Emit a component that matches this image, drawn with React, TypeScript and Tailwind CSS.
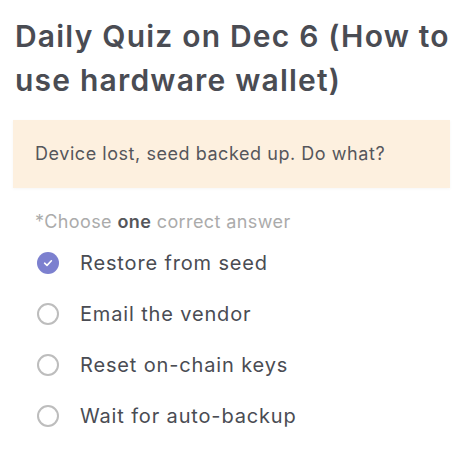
import React from "react";

const options = [
  "Restore from seed",
  "Email the vendor",
  "Reset on-chain keys",
  "Wait for auto-backup",
];

function CheckedRadio() {
  return (
    <span className="flex h-[22px] w-[22px] shrink-0 items-center justify-center rounded-full bg-[#7c80cf]">
      <svg width="12" height="12" viewBox="0 0 12 12" fill="none">
        <path
          d="M2.6 6.2 L5 8.4 L9.4 3.8"
          stroke="#ffffff"
          strokeWidth="1.6"
          strokeLinecap="round"
          strokeLinejoin="round"
        />
      </svg>
    </span>
  );
}

function EmptyRadio() {
  return (
    <span className="block h-[22px] w-[22px] shrink-0 rounded-full border-2 border-[#bdbdbd] bg-white" />
  );
}

export default function App() {
  return (
    <div
      className="min-h-[451px] w-[466px] bg-white"
      style={{ fontFamily: "Inter, 'Noto Sans', sans-serif" }}
    >
      <h1 className="px-[15px] pt-[14px] text-[30px] font-semibold leading-[44px] tracking-[1.2px] text-[#4a4c53]">
        Daily Quiz on Dec 6 (How to use hardware wallet)
      </h1>

      <div className="ml-[13px] mr-[16px] mt-[18px] flex h-[68px] items-center bg-[#fdf0df] px-[22px] shadow-[0_1px_3px_rgba(0,0,0,0.04)]">
        <p className="text-[18px] leading-[24px] tracking-[0.55px] text-[#55565b]">
          Device lost, seed backed up. Do what?
        </p>
      </div>

      <p className="mt-[22px] px-[35px] text-[18px] leading-[24px] tracking-[0.4px] text-[#ababab]">
        *Choose <span className="font-semibold text-[#55565b]">one</span> correct answer
      </p>

      <ul className="mt-[3px] flex flex-col">
        {options.map((label, i) => (
          <li key={label} className="flex h-[51px] items-center gap-[21px] pl-[37px]">
            {i === 0 ? <CheckedRadio /> : <EmptyRadio />}
            <span className="text-[20px] leading-[26px] tracking-[0.85px] text-[#4a4c53]">
              {label}
            </span>
          </li>
        ))}
      </ul>
    </div>
  );
}
